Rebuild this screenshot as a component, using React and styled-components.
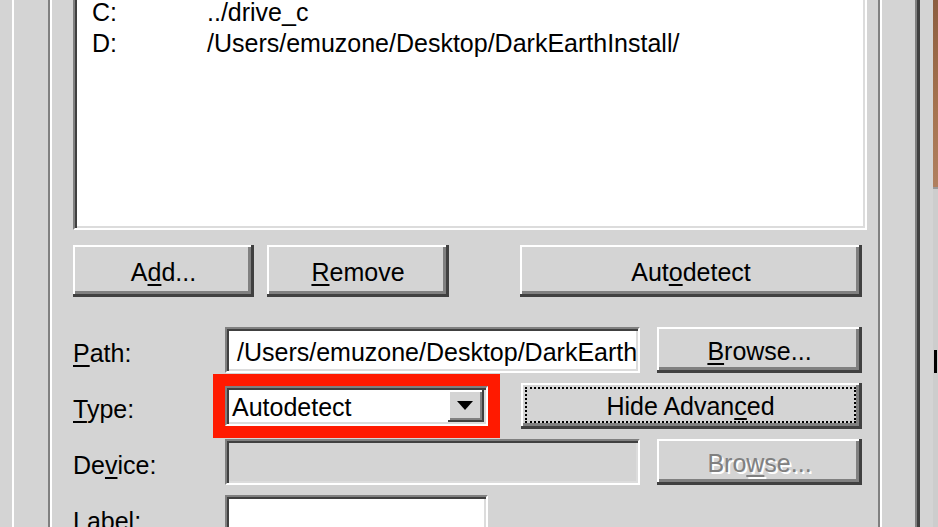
import React from "react";
import styled, { createGlobalStyle } from "styled-components";

const GlobalStyle = createGlobalStyle`
  html, body {
    margin: 0;
    padding: 0;
    background: #d4d4d4;
    overflow: hidden;
  }
  body {
    font-family: "Liberation Sans", Arial, sans-serif;
    font-size: 25px;
    color: #000;
  }
`;

const drives = [
  { letter: "C:", path: "../drive_c" },
  { letter: "D:", path: "/Users/emuzone/Desktop/DarkEarthInstall/" },
];

const App = () => (
  <>
    <GlobalStyle />
    <Screen>
      <TabPage>
        <Group>
          <DriveList>
            {drives.map((d) => (
              <DriveRow key={d.letter}>
                <span>{d.letter}</span>
                <span>{d.path}</span>
              </DriveRow>
            ))}
          </DriveList>

          <ButtonBar>
            <Button $width={181} $height={52}>
              A<Key>d</Key>d...
            </Button>
            <Button $width={182} $height={52}>
              <Key>R</Key>emove
            </Button>
            <Button $width={342} $height={52} $push>
              Aut<Key>o</Key>detect
            </Button>
          </ButtonBar>

          <Form>
            <FormRow>
              <FieldLabel>
                <Key>P</Key>ath:
              </FieldLabel>
              <TextField $width={415}>/Users/emuzone/Desktop/DarkEarthInstall/</TextField>
              <Button $width={205} $height={46} $push>
                <Key>B</Key>rowse...
              </Button>
            </FormRow>

            <FormRow>
              <FieldLabel>
                <Key>T</Key>ype:
              </FieldLabel>
              <Combo>
                <ComboText>Autodetect</ComboText>
                <DropButton>
                  <svg width="16" height="9" viewBox="0 0 16 9">
                    <polygon points="0,0 16,0 8,9" fill="#000" />
                  </svg>
                </DropButton>
              </Combo>
              <Button $width={341} $height={46} $push $focused>
                <FocusRing>
                  Hide Advan<Key>c</Key>ed
                </FocusRing>
              </Button>
            </FormRow>

            <FormRow>
              <FieldLabel>
                De<Key>v</Key>ice:
              </FieldLabel>
              <TextField $width={415} $disabled />
              <Button $width={205} $height={46} $push disabled>
                Bro<Key>w</Key>se...
              </Button>
            </FormRow>

            <FormRow>
              <FieldLabel>
                <Key>L</Key>abel:
              </FieldLabel>
              <TextField $width={263} />
            </FormRow>
          </Form>
        </Group>
      </TabPage>

      <BackWindow>
        <Wallpaper />
        <BackFrame>
          <BackMark />
        </BackFrame>
      </BackWindow>
    </Screen>
  </>
);

export default App;

const Screen = styled.div`
  display: flex;
  box-sizing: border-box;
  width: 938px;
  height: 527px;
  overflow: hidden;
  padding-left: 12px;
  background: #d4d4d4;
`;

const TabPage = styled.div`
  box-sizing: border-box;
  flex-shrink: 0;
  width: 908px;
  margin-top: -40px;
  padding-left: 34px;
  border-left: 2px solid #fff;
  border-right: 3px solid #404040;
  box-shadow: inset -2px 0 #808080;
`;

const Group = styled.div`
  box-sizing: border-box;
  width: 834px;
  height: 100%;
  padding: 0 13px 0 23px;
  border-left: 2px solid #808080;
  border-right: 2px solid #fff;
  box-shadow: inset 2px 0 #fff, inset -2px 0 #808080;
`;

const Sunken = styled.div`
  box-sizing: border-box;
  border: 2px solid;
  border-color: #808080 #fff #fff #808080;
  box-shadow: inset 2px 2px #404040, inset -2px -2px #dcdcdc;
`;

const DriveList = styled(Sunken)`
  display: flex;
  flex-direction: column;
  gap: 6px;
  height: 270px;
  padding: 38px 0 0 17px;
  background: #fff;
`;

const DriveRow = styled.div`
  display: grid;
  grid-template-columns: 115px 1fr;
  line-height: 25px;
  white-space: nowrap;
`;

const ButtonBar = styled.div`
  display: flex;
  gap: 13px;
  margin: 15px 5px 0 0;
`;

const Button = styled.button`
  box-sizing: border-box;
  display: flex;
  align-items: center;
  justify-content: center;
  flex-shrink: 0;
  width: ${(p) => p.$width}px;
  height: ${(p) => p.$height}px;
  margin-left: ${(p) => (p.$push ? "auto" : "0")};
  padding: ${(p) => (p.$focused ? "4px 6px 6px 4px" : "3px 0 0 0")};
  border: none;
  background: #d4d4d4;
  font: inherit;
  color: #000;
  box-shadow: inset -3px -3px #404040, inset 2px 2px #fff, inset -6px -6px #808080;

  &:disabled {
    color: #808080;
    text-shadow: 2px 2px 0 #fff;
  }
`;

const FocusRing = styled.span`
  box-sizing: border-box;
  flex: 1;
  align-self: stretch;
  display: flex;
  align-items: center;
  justify-content: center;
  padding-top: 2px;
  border: 2px dotted #000;
`;

const Key = styled.span`
  text-decoration: underline;
  text-decoration-thickness: 2px;
  text-underline-offset: 3px;
`;

const Form = styled.div`
  display: grid;
  grid-auto-rows: 46px;
  row-gap: 10px;
  margin: 30px 5px 0 0;
`;

const FormRow = styled.div`
  display: flex;
  align-items: center;
`;

const FieldLabel = styled.span`
  flex-shrink: 0;
  width: 152px;
  padding-top: 6px;
  white-space: nowrap;
`;

const TextField = styled(Sunken)`
  display: flex;
  align-items: center;
  flex-shrink: 0;
  width: ${(p) => p.$width}px;
  height: 46px;
  padding: 5px 8px 0 10px;
  white-space: nowrap;
  overflow: hidden;
  background: ${(p) => (p.$disabled ? "#d4d4d4" : "#fff")};
`;

const Combo = styled(Sunken)`
  display: flex;
  align-items: stretch;
  flex-shrink: 0;
  width: 263px;
  height: 40px;
  padding: 2px;
  background: #fff;
  outline: 12px solid #ff1a00;
`;

const ComboText = styled.span`
  flex: 1;
  display: flex;
  align-items: center;
  padding: 2px 0 0 3px;
`;

const DropButton = styled.span`
  display: flex;
  align-items: center;
  justify-content: center;
  width: 36px;
  padding: 0 2px 2px 0;
  box-sizing: border-box;
  background: #d4d4d4;
  box-shadow: inset -2px -2px #404040, inset 2px 2px #fff, inset -4px -4px #808080;
`;

const BackWindow = styled.div`
  display: flex;
  flex-direction: column;
  flex-shrink: 0;
  width: 5px;
  margin-left: 13px;
`;

const Wallpaper = styled.div`
  height: 187px;
  background: linear-gradient(#8c5e40, #a67450 60%, #b08060);
`;

const BackFrame = styled.div`
  flex: 1;
  background: #cdcdcd;
  border-top: 2px solid #9a9a9a;
`;

const BackMark = styled.div`
  width: 3px;
  height: 23px;
  margin: 161px 0 0 1px;
  background: #000;
`;
